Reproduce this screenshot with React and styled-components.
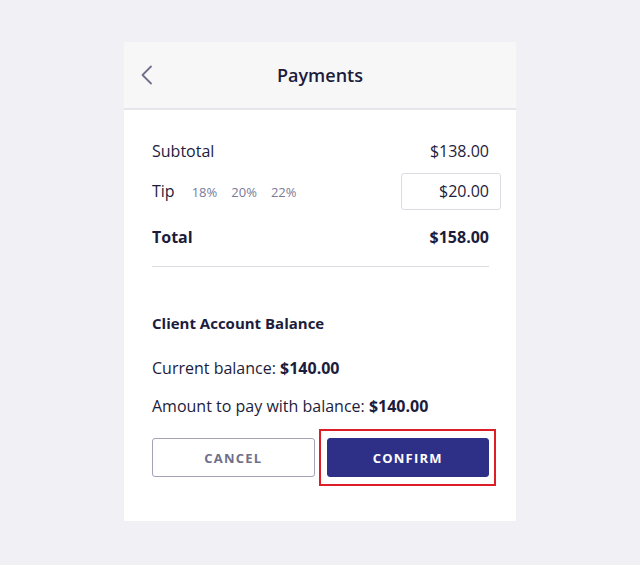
import React from "react";
import styled, { createGlobalStyle } from "styled-components";

const GlobalStyle = createGlobalStyle`
  html, body {
    margin: 0;
    padding: 0;
    background: #f1f1f5;
    font-family: "Open Sans", "Lato", sans-serif;
    color: #1c1c3c;
  }
`;

const Page = styled.div`
  width: 640px;
  height: 565px;
  display: flex;
  justify-content: center;
  padding-top: 42px;
  box-sizing: border-box;
`;

const Card = styled.div`
  width: 392px;
  height: 479px;
  background: #ffffff;
  display: flex;
  flex-direction: column;
`;

const Header = styled.div`
  height: 66px;
  background: #f7f7f8;
  border-bottom: 2px solid #e6e6ea;
  display: grid;
  grid-template-columns: 48px 1fr 48px;
  align-items: center;
`;

const BackButton = styled.button`
  border: none;
  background: none;
  padding: 0 0 0 16px;
  display: flex;
  align-items: center;
  cursor: pointer;
`;

const Title = styled.h1`
  margin: 0;
  font-size: 18px;
  font-weight: 600;
  text-align: center;
  color: #1c1c3c;
`;

const Body = styled.div`
  padding: 21px 27px 0 28px;
  display: flex;
  flex-direction: column;
`;

const Row = styled.div`
  display: flex;
  align-items: center;
  justify-content: space-between;
  height: ${(p) => p.$h || 40}px;
  font-size: 16px;
  font-weight: ${(p) => (p.$bold ? 700 : 400)};
`;

const TipLabel = styled.div`
  display: flex;
  align-items: center;
  gap: 17px;
`;

const Percents = styled.div`
  display: flex;
  gap: 14px;
  font-size: 13px;
  color: #7a7a98;
  padding-top: 2px;
`;

const TipInput = styled.div`
  width: 100px;
  height: 37px;
  box-sizing: border-box;
  border: 1px solid #dcdce2;
  border-radius: 3px;
  display: flex;
  align-items: center;
  justify-content: flex-end;
  padding-right: 11px;
  margin-right: -12px;
  font-size: 16px;
`;

const Divider = styled.hr`
  border: none;
  height: 1px;
  background: #dcdce2;
  margin: 3px 0 0;
`;

const SectionTitle = styled.h2`
  margin: 39px 0 0;
  font-size: 15px;
  font-weight: 700;
  line-height: 34px;
`;

const Line = styled.p`
  margin: ${(p) => p.$mt || 0}px 0 0;
  font-size: 16px;
  line-height: 38px;

  b {
    font-weight: 700;
  }
`;

const Actions = styled.div`
  display: grid;
  grid-template-columns: 1fr 1fr;
  gap: 12px;
  margin-top: 13px;
`;

const Button = styled.button`
  height: 39px;
  border-radius: 3px;
  font-family: inherit;
  font-size: 13px;
  font-weight: 700;
  letter-spacing: 1.2px;
  cursor: pointer;
  border: 1px solid ${(p) => (p.$primary ? "#2e3088" : "#a3a3b8")};
  background: ${(p) => (p.$primary ? "#2e3088" : "#ffffff")};
  color: ${(p) => (p.$primary ? "#ffffff" : "#6f6f8a")};
`;

const Focus = styled.div`
  position: relative;
  display: grid;

  &::after {
    content: "";
    position: absolute;
    inset: -9px -7px -9px -8px;
    border: 2px solid rgb(222, 30, 38);
    pointer-events: none;
  }
`;

const ChevronLeft = () => (
  <svg width="13" height="20" viewBox="0 0 13 20" fill="none">
    <path
      d="M11 1.5 L2.5 10 L11 18.5"
      stroke="#6f6f8c"
      strokeWidth="1.8"
      strokeLinecap="round"
      strokeLinejoin="round"
    />
  </svg>
);

export default function App() {
  return (
    <>
      <GlobalStyle />
      <Page>
        <Card>
          <Header>
            <BackButton aria-label="Back">
              <ChevronLeft />
            </BackButton>
            <Title>Payments</Title>
            <span />
          </Header>
          <Body>
            <Row $h={40}>
              <span>Subtotal</span>
              <span>$138.00</span>
            </Row>
            <Row $h={40}>
              <TipLabel>
                <span>Tip</span>
                <Percents>
                  <span>18%</span>
                  <span>20%</span>
                  <span>22%</span>
                </Percents>
              </TipLabel>
              <TipInput>$20.00</TipInput>
            </Row>
            <Row $h={52} $bold>
              <span>Total</span>
              <span>$158.00</span>
            </Row>
            <Divider />
            <SectionTitle>Client Account Balance</SectionTitle>
            <Line $mt={9}>
              Current balance: <b>$140.00</b>
            </Line>
            <Line>
              Amount to pay with balance: <b>$140.00</b>
            </Line>
            <Actions>
              <Button>CANCEL</Button>
              <Focus>
                <Button $primary>CONFIRM</Button>
              </Focus>
            </Actions>
          </Body>
        </Card>
      </Page>
    </>
  );
}
